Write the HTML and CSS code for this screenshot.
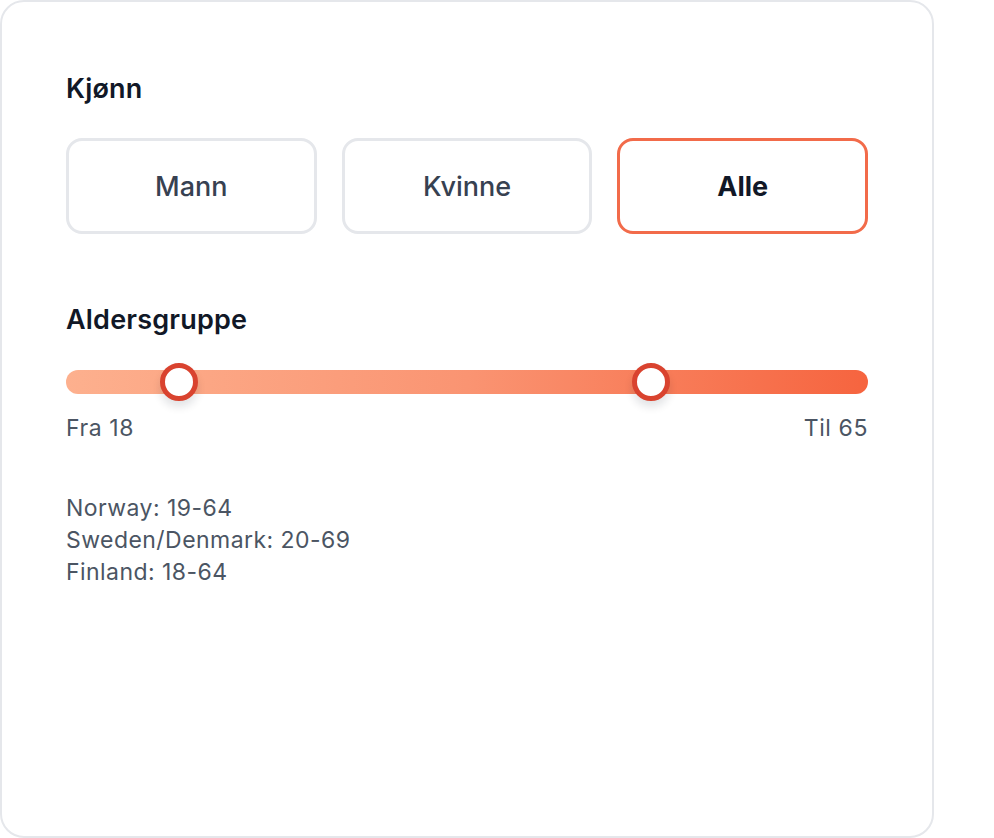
FILE: index.html
```html
<!DOCTYPE html>
<html lang="no">
<head>
<meta charset="utf-8">
<title>Filter</title>
<link rel="stylesheet" href="styles.css">
</head>
<body>
<div class="card">
  <h2 class="heading heading-first">Kjønn</h2>
  <div class="options">
    <button class="option">Mann</button>
    <button class="option">Kvinne</button>
    <button class="option option-active">Alle</button>
  </div>

  <h2 class="heading heading-age">Aldersgruppe</h2>
  <div class="slider">
    <div class="track"></div>
    <span class="thumb" style="left: 14.1%"></span>
    <span class="thumb" style="left: 72.9%"></span>
  </div>
  <div class="range-labels">
    <span>Fra 18</span>
    <span>Til 65</span>
  </div>

  <ul class="countries">
    <li>Norway: 19-64</li>
    <li>Sweden/Denmark: 20-69</li>
    <li>Finland: 18-64</li>
  </ul>
</div>
</body>
</html>
```

FILE: styles.css
```css
* { box-sizing: border-box; }

html, body {
  margin: 0;
  padding: 0;
  background: #ffffff;
}

body {
  font-family: Inter, "Noto Sans", "Liberation Sans", sans-serif;
  color: #111827;
}

.card {
  width: 934px;
  height: 838px;
  border: 2px solid #e5e7eb;
  border-radius: 24px;
  padding: 69px 64px 64px 64px;
  background: #ffffff;
}

.heading {
  margin: 0;
  font-size: 27px;
  line-height: 36px;
  letter-spacing: 0.2px;
  font-weight: 600;
  color: #111827;
}

.heading-first { margin-bottom: 31px; }

.heading-age {
  margin-top: 68px;
  margin-bottom: 32px;
}

.options {
  display: grid;
  grid-template-columns: 1fr 1fr 1fr;
  gap: 25px;
}

.option {
  height: 96px;
  border: 3px solid #e5e7eb;
  border-radius: 16px;
  background: #ffffff;
  font-family: inherit;
  font-size: 27px;
  font-weight: 500;
  color: #374151;
  padding: 0;
}

.option-active {
  border-color: #f26b4a;
  font-weight: 700;
  color: #111827;
}

.slider {
  position: relative;
  height: 24px;
}

.track {
  height: 24px;
  border-radius: 12px;
  background: linear-gradient(90deg, #fdb08e 0%, #fa9472 50%, #f6643f 100%);
}

.thumb {
  position: absolute;
  top: 50%;
  width: 38px;
  height: 38px;
  margin-left: -19px;
  margin-top: -19px;
  border-radius: 50%;
  background: #ffffff;
  border: 5px solid #d9432f;
  box-shadow: 0 6px 8px rgba(17, 24, 39, 0.12);
}

.range-labels {
  display: flex;
  justify-content: space-between;
  margin-top: 18px;
  font-size: 23px;
  line-height: 32px;
  letter-spacing: 0.6px;
  color: #4b5563;
}

.countries {
  list-style: none;
  margin: 48px 0 0 0;
  padding: 0;
  font-size: 23px;
  line-height: 32px;
  letter-spacing: 0.45px;
  color: #4b5563;
}
```
